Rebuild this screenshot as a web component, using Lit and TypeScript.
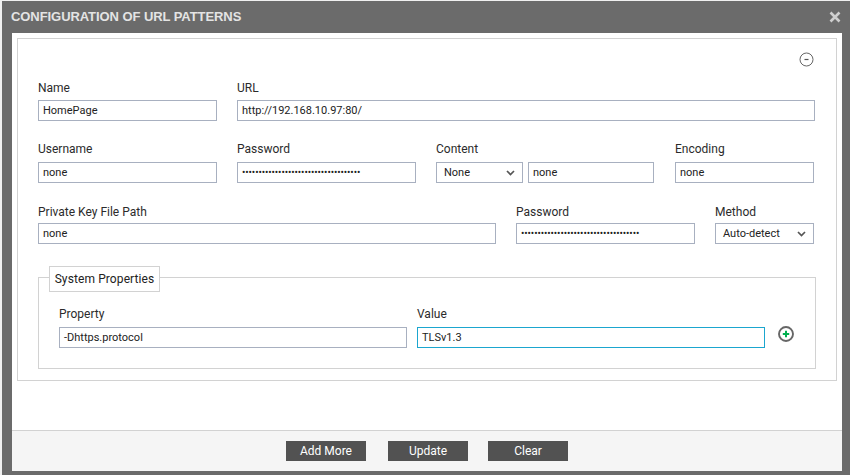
import { LitElement, html, css } from "lit";
import { customElement } from "lit/decorators.js";

const DOTS = "••••••••••••••••••••••••••••••••••••";

@customElement("app-root")
export class AppRoot extends LitElement {
  static override styles = css`
    :host {
      display: block;
      width: 850px;
      height: 475px;
      overflow: hidden;
      background: #f0f0f0;
      font-family: Roboto, "Liberation Sans", sans-serif;
      font-size: 12px;
      color: #222;
    }

    .dialog {
      box-sizing: border-box;
      height: 474px;
      margin-left: 2px;
      margin-top: 1px;
      background: #6b6b6b;
      display: flex;
      flex-direction: column;
      padding: 0 8px 4px 10px;
    }

    .title {
      box-sizing: border-box;
      height: 32px;
      padding-bottom: 2px;
      display: flex;
      align-items: center;
      justify-content: space-between;
      font-family: "Liberation Sans", Arial, sans-serif;
      font-size: 13px;
      font-weight: 700;
      letter-spacing: -0.07px;
      color: #e4e4e4;
      margin-left: -1px;
    }

    .close {
      width: 12px;
      height: 12px;
      margin: 2px 1px 0 0;
    }

    .body {
      flex: 1;
      background: #fff;
      display: flex;
      flex-direction: column;
    }

    .panel {
      box-sizing: border-box;
      height: 343px;
      margin: 5px 5px 0;
      border: 1px solid #d2d2d2;
      padding: 13px 20px 0;
    }

    .toggle {
      display: flex;
      justify-content: flex-end;
      height: 14px;
      margin-right: 2px;
    }

    .row {
      display: flex;
      align-items: flex-start;
    }

    .r1 { margin-top: 15px; }
    .r2 { margin-top: 21px; }
    .r3 { margin-top: 22px; }

    .field {
      display: flex;
      flex-direction: column;
      flex: none;
    }

    label {
      font-size: 12px;
      line-height: 14px;
      height: 15px;
      margin-bottom: 5px;
      color: #2b2b2b;
    }

    .r1 label { margin-bottom: 4px; }
    .r3 label { margin-bottom: 3px; }

    .box {
      box-sizing: border-box;
      height: 21px;
      border: 1px solid #a8b0c0;
      background: #fff;
      padding: 0 4px;
      font-size: 11px;
      line-height: 19px;
      color: #222;
      white-space: nowrap;
      overflow: hidden;
    }

    .dots {
      font-size: 10px;
      letter-spacing: -0.09px;
      color: #222;
    }

    .select {
      display: flex;
      align-items: center;
      justify-content: space-between;
      padding: 0 7px;
    }

    .pair {
      display: flex;
      gap: 5px;
    }

    fieldset {
      box-sizing: border-box;
      margin: 33px 0 0;
      width: 778px;
      height: 92px;
      border: 1px solid #d2d2d2;
      padding: 0;
      position: relative;
    }

    .legend {
      position: absolute;
      left: 10px;
      top: -12px;
      box-sizing: border-box;
      height: 26px;
      width: 111px;
      border: 1px solid #d2d2d2;
      background: #fff;
      display: flex;
      align-items: center;
      justify-content: center;
      font-size: 12px;
      letter-spacing: 0.1px;
      color: #222;
    }

    .props {
      display: flex;
      padding: 29px 0 0 20px;
    }

    .active {
      border-color: #1ba6cf;
    }

    .add {
      width: 16px;
      height: 16px;
      margin: 19px 0 0 13px;
      flex: none;
    }

    .footer {
      margin-top: auto;
      box-sizing: border-box;
      height: 41px;
      border-top: 1px solid #d2d2d2;
      background: #f5f5f5;
      display: flex;
      justify-content: center;
      padding-top: 10px;
    }

    button {
      width: 80px;
      height: 20px;
      border: 0;
      padding: 0;
      background: #525252;
      color: #fff;
      font-family: Roboto, "Liberation Sans", sans-serif;
      font-size: 12px;
      font-weight: 400;
    }

    .b1 { margin-right: 22px; }
    .b2 { margin-right: 20px; }
  `;

  private field(label: string, width: number, value: unknown, gap: number, cls = "") {
    return html`
      <div class="field" style="width:${width}px;margin-right:${gap}px">
        <label>${label}</label>
        <div class="box ${cls}">${value}</div>
      </div>
    `;
  }

  private chevron() {
    return html`
      <svg width="9" height="6" viewBox="0 0 9 6">
        <path d="M1 1l3.5 3.5L8 1" fill="none" stroke="#555" stroke-width="1.7" />
      </svg>
    `;
  }

  override render() {
    return html`
      <div class="dialog">
        <div class="title">
          <span>CONFIGURATION OF URL PATTERNS</span>
          <svg class="close" viewBox="0 0 12 12">
            <path d="M1.5 1.5l9 9M10.5 1.5l-9 9" stroke="#cfcfcf" stroke-width="2.6" />
          </svg>
        </div>
        <div class="body">
          <div class="panel">
            <div class="toggle">
              <svg width="15" height="15" viewBox="0 0 15 15">
                <circle cx="7.5" cy="7.5" r="6.5" fill="none" stroke="#666" stroke-width="1" />
                <path d="M5.5 7.5h4" stroke="#555" stroke-width="1.2" />
              </svg>
            </div>
            <div class="row r1">
              ${this.field("Name", 179, "HomePage", 20)}
              ${this.field("URL", 578, "http://192.168.10.97:80/", 0)}
            </div>
            <div class="row r2">
              ${this.field("Username", 179, "none", 20)}
              ${this.field("Password", 179, DOTS, 20, "dots")}
              <div class="field" style="width:218px;margin-right:21px">
                <label>Content</label>
                <div class="pair">
                  <div class="box select" style="width:87px">None ${this.chevron()}</div>
                  <div class="box" style="width:126px">none</div>
                </div>
              </div>
              ${this.field("Encoding", 139, "none", 0)}
            </div>
            <div class="row r3">
              ${this.field("Private Key File Path", 458, "none", 20)}
              ${this.field("Password", 179, DOTS, 20, "dots")}
              <div class="field" style="width:99px">
                <label>Method</label>
                <div class="box select">Auto-detect ${this.chevron()}</div>
              </div>
            </div>
            <fieldset>
              <div class="legend">System Properties</div>
              <div class="props">
                ${this.field("Property", 348, "-Dhttps.protocol", 10)}
                ${this.field("Value", 348, "TLSv1.3", 0, "active")}
                <svg class="add" viewBox="0 0 16 16">
                  <circle cx="8" cy="8" r="7" fill="none" stroke="#666" stroke-width="1.9" />
                  <path d="M8 4.8v6.4M4.8 8h6.4" stroke="#00b050" stroke-width="2" />
                </svg>
              </div>
            </fieldset>
          </div>
          <div class="footer">
            <button class="b1">Add More</button>
            <button class="b2">Update</button>
            <button>Clear</button>
          </div>
        </div>
      </div>
    `;
  }
}

declare global {
  interface HTMLElementTagNameMap {
    "app-root": AppRoot;
  }
}
